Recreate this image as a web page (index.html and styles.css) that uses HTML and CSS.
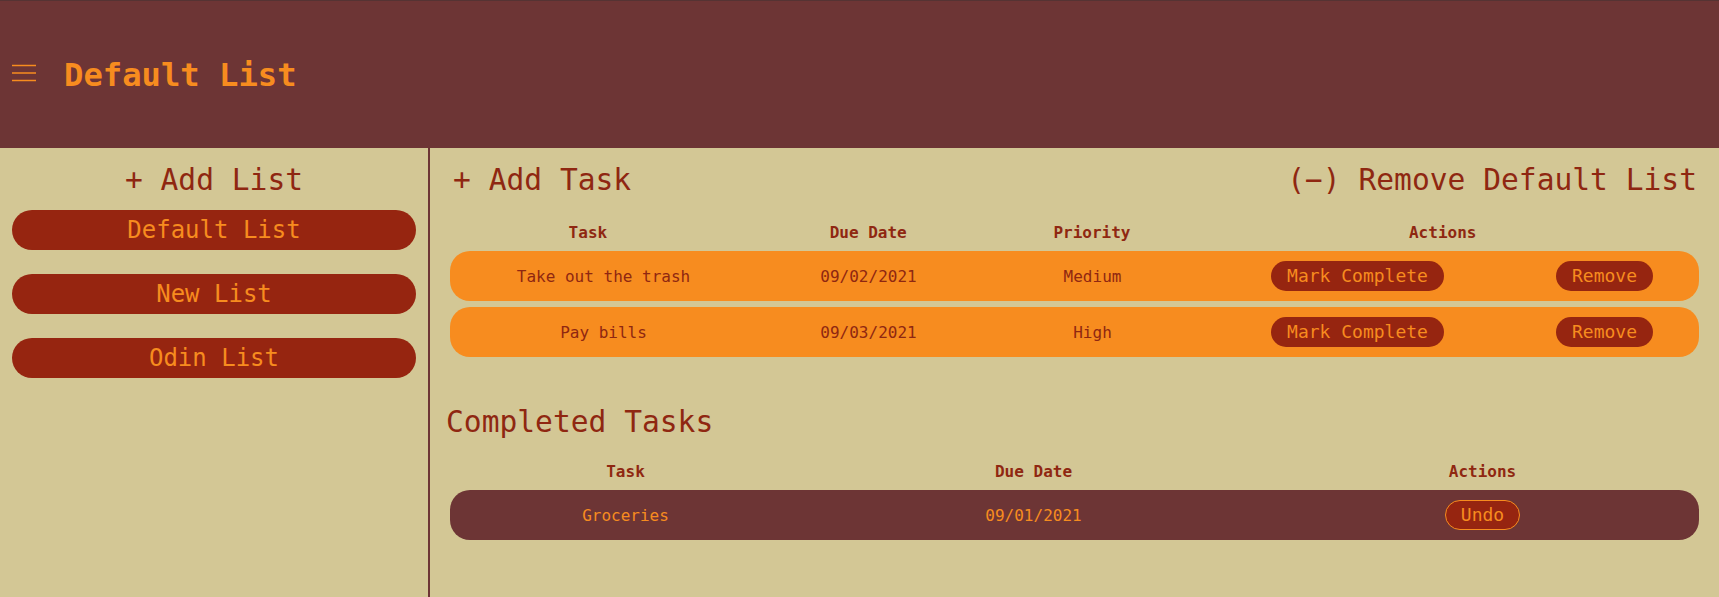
FILE: index.html
```html
<!DOCTYPE html>
<html>
<head>
<meta charset="utf-8">
<link rel="stylesheet" href="styles.css">
</head>
<body>
<header class="topbar">
  <button class="menu-btn" aria-label="menu">
    <svg width="24" height="18" viewBox="0 0 24 18"><path d="M0 1.5H24M0 9H24M0 16.5H24" stroke="#f78c1f" stroke-width="1.6" fill="none"/></svg>
  </button>
  <h1 class="title">Default List</h1>
</header>
<div class="layout">
  <aside class="sidebar">
    <h2 class="heading center">+ Add List</h2>
    <nav class="lists">
      <button class="list-btn">Default List</button>
      <button class="list-btn">New List</button>
      <button class="list-btn">Odin List</button>
    </nav>
  </aside>
  <main class="main">
    <div class="main-head">
      <h2 class="heading">+ Add Task</h2>
      <h2 class="heading">(&minus;) Remove Default List</h2>
    </div>
    <div class="thead tasks-head">
      <span>Task</span><span>Due Date</span><span>Priority</span><span class="actions-h">Actions</span>
    </div>
    <div class="rows">
      <div class="row task-row">
        <span>Take out the trash</span><span>09/02/2021</span><span>Medium</span>
        <span><button class="pill">Mark Complete</button></span>
        <span><button class="pill">Remove</button></span>
      </div>
      <div class="row task-row">
        <span>Pay bills</span><span>09/03/2021</span><span>High</span>
        <span><button class="pill">Mark Complete</button></span>
        <span><button class="pill">Remove</button></span>
      </div>
    </div>
    <h2 class="heading completed-title">Completed Tasks</h2>
    <div class="thead done-head">
      <span>Task</span><span>Due Date</span><span>Actions</span>
    </div>
    <div class="rows">
      <div class="row done-row">
        <span>Groceries</span><span>09/01/2021</span>
        <span><button class="pill outline">Undo</button></span>
      </div>
    </div>
  </main>
</div>
</body>
</html>
```

FILE: styles.css
```css
* { box-sizing: border-box; }
html, body { margin: 0; height: 100%; }
body {
  font-family: "DejaVu Sans Mono", monospace;
  background: #d3c795;
  color: #8f2711;
  display: flex;
  flex-direction: column;
}
.topbar {
  height: 148px;
  flex: none;
  background: #6d3535;
  border-top: 1px solid #553333;
  display: flex;
  align-items: center;
  padding-left: 12px;
  gap: 28px;
}
.menu-btn {
  background: none;
  border: 0;
  padding: 0;
  display: flex;
  margin-top: -3px;
}
.title {
  margin: 0;
  font-size: 32.2px;
  font-weight: bold;
  color: #f78c1f;
  line-height: 40px;
}
.layout {
  flex: 1;
  display: flex;
}
.sidebar {
  width: 430px;
  flex: none;
  border-right: 2px solid #6d3535;
  padding: 14px 12px 0;
}
.heading {
  margin: 0;
  font-size: 29.6px;
  font-weight: normal;
  line-height: 36px;
  color: #8f2711;
}
.center { text-align: center; }
.lists {
  margin-top: 12px;
  display: flex;
  flex-direction: column;
  gap: 24px;
}
.list-btn {
  height: 40px;
  border: 0;
  border-radius: 20px;
  background: #962510;
  color: #f78c1f;
  font-family: inherit;
  font-size: 24px;
  line-height: 40px;
  padding: 0;
}
.main {
  flex: 1;
  padding: 14px 20px 0;
}
.main-head {
  display: flex;
  justify-content: space-between;
  padding: 0 2px 0 3px;
}
.thead {
  display: grid;
  font-size: 16px;
  font-weight: bold;
  line-height: 19px;
  text-align: center;
  margin-top: 25px;
  margin-bottom: 9px;
}
.tasks-head { grid-template-columns: 276fr 285fr 163fr 526fr; }
.actions-h { padding-left: 13px; }
.done-head {
  grid-template-columns: 351fr 465fr 433fr;
  margin-top: 22px;
}
.rows {
  display: flex;
  flex-direction: column;
  gap: 6px;
}
.row {
  display: grid;
  height: 50px;
  align-items: center;
  text-align: center;
  border-radius: 20px;
  font-size: 16px;
}
.task-row {
  grid-template-columns: 307fr 223fr 225fr 305fr 189fr;
  background: #f78c1f;
  color: #8f2711;
}
.done-row {
  grid-template-columns: 351fr 465fr 433fr;
  background: #6d3535;
  color: #f78c1f;
}
.pill {
  font-family: inherit;
  font-size: 18px;
  line-height: 21px;
  padding: 4px 16px 5px;
  border: 0;
  border-radius: 15px;
  background: #962510;
  color: #f78c1f;
}
.pill.outline {
  border: 1px solid #f78c1f;
  padding: 3px 15px 4px;
}
.completed-title {
  margin-top: 47px;
  margin-left: -4px;
}
```
